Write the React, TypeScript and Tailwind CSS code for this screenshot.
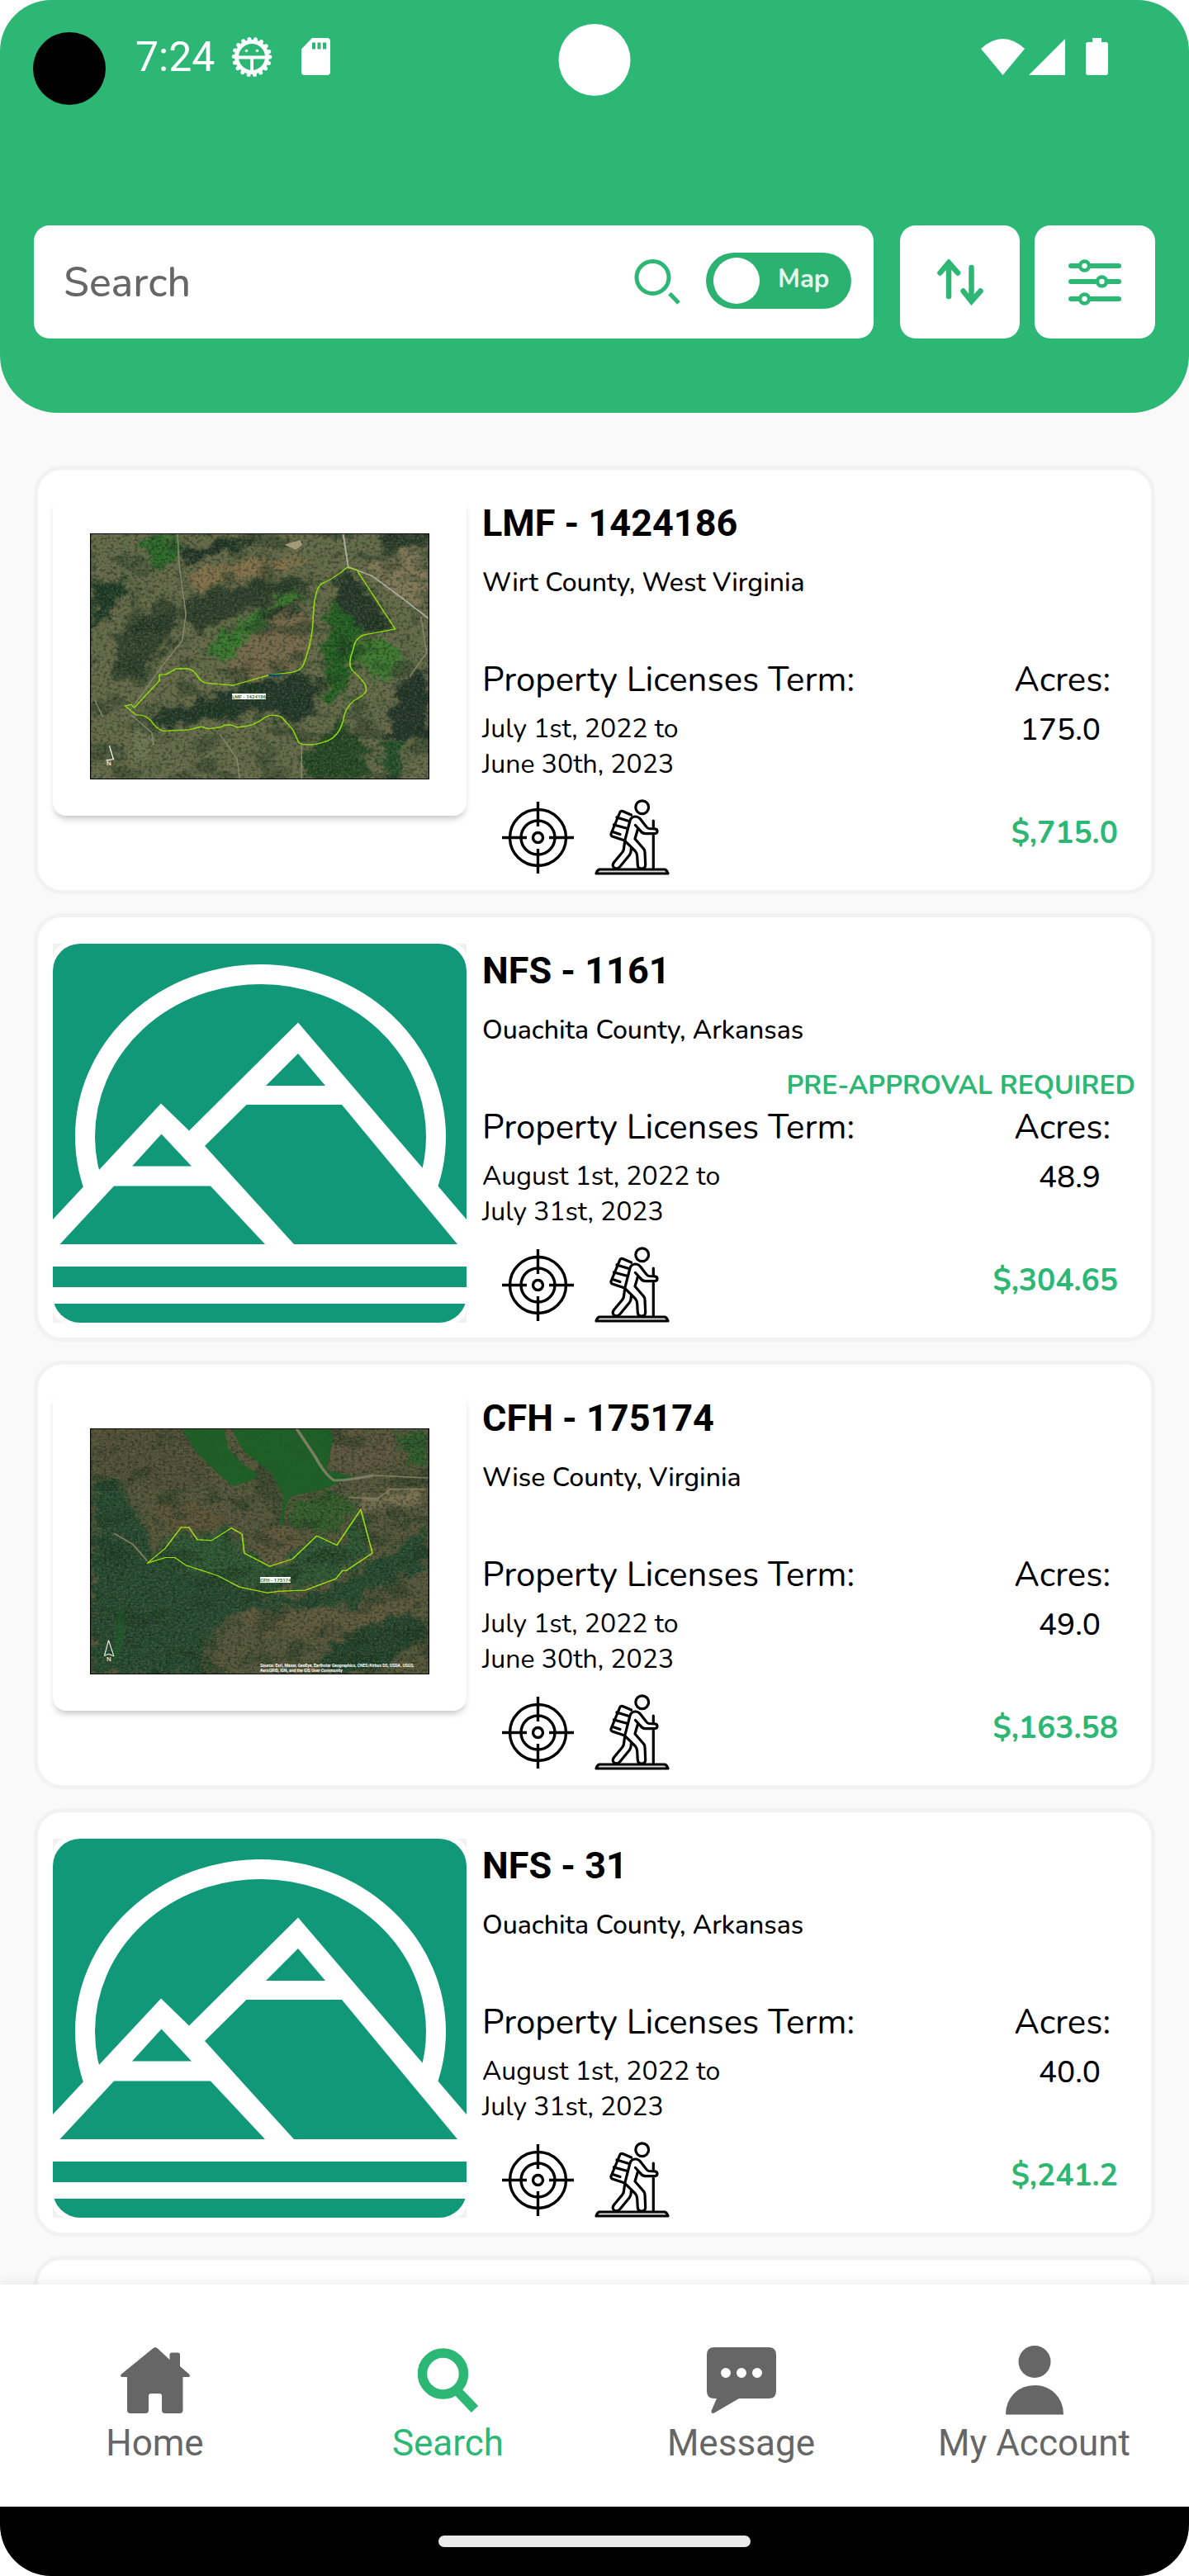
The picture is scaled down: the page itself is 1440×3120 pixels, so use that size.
import type { ReactNode } from "react";

type Thumb = "wirt" | "logo" | "wise";

interface Property {
  id: string;
  title: string;
  location: string;
  from: string;
  to: string;
  acres: string;
  price: string;
  thumb: Thumb;
  preApproval?: boolean;
}

const properties: Property[] = [
  { id: "p1", title: "LMF - 1424186", location: "Wirt County, West Virginia", from: "July 1st, 2022 to", to: "June 30th, 2023", acres: "175.0", price: "$,715.0", thumb: "wirt" },
  { id: "p2", title: "NFS - 1161", location: "Ouachita County, Arkansas", from: "August 1st, 2022 to", to: "July 31st, 2023", acres: "48.9", price: "$,304.65", thumb: "logo", preApproval: true },
  { id: "p3", title: "CFH - 175174", location: "Wise County, Virginia", from: "July 1st, 2022 to", to: "June 30th, 2023", acres: "49.0", price: "$,163.58", thumb: "wise" },
  { id: "p4", title: "NFS - 31", location: "Ouachita County, Arkansas", from: "August 1st, 2022 to", to: "July 31st, 2023", acres: "40.0", price: "$,241.2", thumb: "logo" },
];

/* ---------- status bar ---------- */

function DebugIcon() {
  return (
    <svg width="50" height="50" viewBox="0 0 50 50" fill="none" stroke="#fff" aria-hidden="true">
      <circle cx="25" cy="25" r="18.5" strokeWidth="5" />
      <circle cx="25" cy="25" r="21.8" strokeWidth="5" strokeLinecap="round" strokeDasharray="0 7.61" />
      <path d="M8 25.5H42M25 25V43" strokeWidth="4" />
      <circle cx="18.5" cy="17.5" r="1.8" fill="#fff" stroke="none" />
      <circle cx="31.5" cy="17.5" r="1.8" fill="#fff" stroke="none" />
    </svg>
  );
}

function SdCardIcon() {
  return (
    <svg width="35" height="45" viewBox="0 0 35 45" aria-hidden="true">
      <path d="M13 0H31a4 4 0 0 1 4 4V41a4 4 0 0 1-4 4H4a4 4 0 0 1-4-4V13.5Z" fill="#fff" />
      <path d="M15 5.500V13.500M21.500 5.500V13.500M28 5.500V13.500" stroke="#2DB775" strokeWidth="4" />
    </svg>
  );
}

function StatusBar() {
  return (
    <div className="flex h-[137px] items-center pr-[98px] pl-[164px] text-white">
      <span className="absolute top-[39px] left-10 size-[88px] rounded-full bg-black" />
      <span className="absolute top-[29px] left-1/2 size-[87px] -translate-x-1/2 rounded-full bg-white" />
      <time className="text-[50px] leading-[56px]">7:24</time>
      <span className="ml-5 flex items-center gap-[35px]">
        <DebugIcon />
        <SdCardIcon />
      </span>
      <span className="ml-auto flex items-center">
        <svg width="53" height="44" viewBox="0 0 53 44" aria-hidden="true">
          <path d="M0 12Q26.500-12 53 12L26.500 44Z" fill="#fff" />
        </svg>
        <svg className="ml-[5px]" width="44" height="44" viewBox="0 0 44 44" aria-hidden="true">
          <path d="M44 0V44H0Z" fill="#fff" />
        </svg>
        <svg className="ml-[25px]" width="27" height="45" viewBox="0 0 27 45" aria-hidden="true">
          <path d="M8 0H19V5H24a3 3 0 0 1 3 3V42a3 3 0 0 1-3 3H3a3 3 0 0 1-3-3V8a3 3 0 0 1 3-3H8Z" fill="#fff" />
        </svg>
      </span>
    </div>
  );
}

/* ---------- header ---------- */

function Header() {
  return (
    <header className="relative rounded-b-[70px] bg-[#2DB775] pb-[90px]">
      <StatusBar />
      <div className="mt-[136px] flex h-[137px] px-[41px]">
        <form className="flex flex-1 items-center rounded-[19px] bg-white pr-[27px] pl-9" onSubmit={(e) => e.preventDefault()}>
          <input
            type="text"
            aria-label="Search"
            placeholder="Search"
            className="min-w-0 flex-1 bg-transparent pt-0.5 font-['Nunito',sans-serif] text-[50px] leading-[62px] font-medium outline-none placeholder:text-[#666]"
          />
          <button type="submit" aria-label="Submit search" className="mr-[31px]">
            <svg width="56" height="55" viewBox="0 0 56 55" fill="none" stroke="#2DB775" strokeWidth="5" aria-hidden="true">
              <circle cx="22.500" cy="22" r="19.500" />
              <path d="M43 41.500L54 53" />
            </svg>
          </button>
          <label className="mb-1 flex h-[68px] w-[176px] cursor-pointer items-center rounded-full bg-[#2BB271] pl-[9px]">
            <input type="checkbox" role="switch" className="sr-only" />
            <span className="size-[56px] rounded-full bg-white" />
            <span className="mb-1 ml-[22px] font-['Nunito',sans-serif] text-[31px] leading-9 font-bold text-[#E4F6EC]">Map</span>
          </label>
        </form>
        <button type="button" aria-label="Sort" className="ml-8 flex w-[145px] items-center justify-center rounded-[19px] bg-white">
          <svg width="56" height="56" viewBox="0 0 56 56" fill="none" stroke="#2DB775" strokeWidth="6.500" strokeLinecap="round" aria-hidden="true">
            <path d="M14 45V6M3.500 16.500L14 4L25 16.500M41.500 10V49M31.500 38.500L41.500 51L52.500 38.500" />
          </svg>
        </button>
        <button type="button" aria-label="Filter" className="ml-[18px] flex w-[146px] items-center justify-center rounded-[19px] bg-white">
          <svg width="64" height="56" viewBox="0 0 64 56" fill="#fff" stroke="#2DB775" strokeWidth="6" strokeLinecap="round" aria-hidden="true">
            <path d="M3 8H61M3 27H61M3 48H61" />
            <g strokeWidth="4.500">
              <circle cx="19.500" cy="8" r="5.500" />
              <circle cx="40.500" cy="27" r="5.500" />
              <circle cx="19.500" cy="48" r="5.500" />
            </g>
          </svg>
        </button>
      </div>
    </header>
  );
}

/* ---------- thumbnails ---------- */

function MountainLogo() {
  return (
    <svg className="block h-[459px] w-full" viewBox="0 0 501 459" preserveAspectRatio="none" role="img" aria-label="Mountain logo">
      <defs>
        <clipPath id="sky">
          <rect width="501" height="334" />
        </clipPath>
      </defs>
      <rect width="501" height="459" fill="#f1f1f1" />
      <rect width="501" height="459" rx="17" fill="#fff" />
      <rect width="501" height="459" rx="33" fill="#119879" />
      <ellipse cx="251.500" cy="233.500" rx="212.500" ry="196.500" fill="none" stroke="#fff" strokeWidth="24" clipPath="url(#sky)" />
      <path d="M0 334L131 193.500L165 226.500L297 95.500L501 334V391H0Z" fill="#fff" />
      <g fill="#119879">
        <path d="M131.500 230.500L168 269.500H96Z" />
        <path d="M74 293.500H191L257 364H8.500Z" />
        <path d="M297 133L330 172H258Z" />
        <path d="M234.500 195H350L490 364H292L184 245Z" />
      </g>
      <rect y="416" width="501" height="20" fill="#fff" />
    </svg>
  );
}

function MapFrame({ prefix, tone, seed, box, children, overlay }: { prefix: string; tone: string; seed: number; box: [number, number, number, number]; children: ReactNode; overlay: ReactNode }) {
  const [x, y, w, h] = box;
  return (
    <div className="px-[45px] pt-[45px] pb-11">
      <div className="relative">
        <svg className="block h-[298px] w-full bg-[#46512f]" viewBox={box.join(" ")} preserveAspectRatio="none" role="img" aria-label="Satellite map">
          <defs>
            <filter id={prefix + "-dark"} x="0" y="0" width="100%" height="100%" colorInterpolationFilters="sRGB">
              <feTurbulence type="fractalNoise" baseFrequency="0.012 0.014" numOctaves="5" seed={seed} />
              <feColorMatrix values="0 0 0 0 0.10  0 0 0 0 0.20  0 0 0 0 0.12  0 6 0 0 -3.100" />
            </filter>
            <filter id={prefix + "-grain"} x="0" y="0" width="100%" height="100%" colorInterpolationFilters="sRGB">
              <feTurbulence type="fractalNoise" baseFrequency="0.110" numOctaves="3" seed={seed + 4} />
              <feColorMatrix values="0 0 0 0 0.07  0 0 0 0 0.14  0 0 0 0 0.08  0 5 0 0 -2.400" />
            </filter>
            <filter id={prefix + "-light"} x="0" y="0" width="100%" height="100%" colorInterpolationFilters="sRGB">
              <feTurbulence type="fractalNoise" baseFrequency="0.160" numOctaves="2" seed={seed + 9} />
              <feColorMatrix values="0 0 0 0 0.52  0 0 0 0 0.52  0 0 0 0 0.38  6 0 0 0 -3.000" />
            </filter>
            <filter id={prefix + "-soft"} x="-20%" y="-20%" width="140%" height="140%" colorInterpolationFilters="sRGB">
              <feGaussianBlur stdDeviation="7" result="soft" />
              <feTurbulence type="fractalNoise" baseFrequency="0.025" numOctaves="4" seed={seed + 2} result="warp" />
              <feDisplacementMap in="soft" in2="warp" scale="75" xChannelSelector="R" yChannelSelector="G" />
            </filter>
          </defs>
          <rect x={x} y={y} width={w} height={h} fill={tone} />
          {children}
          <rect x={x} y={y} width={w} height={h} opacity="0.420" filter={"url(#" + prefix + "-dark)"} />
          <rect x={x} y={y} width={w} height={h} opacity="0.400" filter={"url(#" + prefix + "-grain)"} />
          <rect x={x} y={y} width={w} height={h} opacity="0.260" filter={"url(#" + prefix + "-light)"} />
          <use href={"#" + prefix + "-lines"} />
          <rect x={x} y={y} width={w} height={h} fill="none" stroke="#000" strokeWidth="5" />
        </svg>
        {overlay}
      </div>
    </div>
  );
}

function WirtMap() {
  return (
    <MapFrame
      prefix="wirt"
      tone="#656a4a"
      seed={3}
      box={[237, 297, 895, 831]}
      overlay={
        <>
          <span className="absolute top-[194px] left-[172px] bg-white text-[6px] leading-[7px] font-bold text-[#4b7010]">LMF - 1424186</span>
          <span className="absolute top-[275px] left-[20px] text-[8px] leading-[8px] text-white">N</span>
        </>
      }
    >
      <g filter="url(#wirt-soft)">
        <path d="M380 300L468 303L465 380L410 420L385 380Z" fill="#2c6a2a" />
        <path d="M555 650L640 590L760 500L810 510L730 580L700 650L600 725L545 700Z" fill="#38792e" />
        <path d="M885 480L980 540L950 600L940 700L900 870L850 860L860 640Z" fill="#215f22" />
        <path d="M950 650L1040 670L1065 740L1000 790L935 730Z" fill="#3c7a30" />
        <path d="M240 470L350 440L270 590L240 640Z" fill="#1c3a26" />
        <path d="M470 355L600 320L700 300L570 370L490 400Z" fill="#223428" />
        <path d="M500 510L740 445L850 460L740 510L600 590L520 640L480 560Z" fill="#2f402c" />
        <path d="M430 900L640 810L800 770L840 800L830 900L780 940L700 900L440 955L400 930Z" fill="#23382a" />
        <path d="M890 450L925 415L1035 610L960 630L880 520Z" fill="#26392b" />
        <path d="M1060 790L1130 760V1000L1020 980Z" fill="#22352a" />
        <path d="M800 1040L900 930L980 1060L960 1127H800Z" fill="#264a26" />
        <path d="M300 640L440 520L480 560L440 680L360 780L300 780Z" fill="#34442f" />
        <path d="M700 560L800 530L790 600L710 610Z" fill="#303c2c" />
        <path d="M490 440L620 390L740 370L820 400L700 440L520 490Z" fill="#84724c" />
        <path d="M640 640L800 540L820 640L780 750L640 790L610 760Z" fill="#77694d" />
        <path d="M960 400L1100 350L1130 400V560L1040 510Z" fill="#82785a" />
        <path d="M340 920L410 980L400 1020L350 1080Z" fill="#6f7756" />
        <path d="M1000 300H1130V350L1010 360Z" fill="#2c3d2c" />
        <path d="M1000 1000L1060 990L1060 1127H1010Z" fill="#24502a" />
      </g>
      <g id="wirt-lines" fill="none">
        <g stroke="#83856c" strokeWidth="3">
          <path d="M468 298L472 400L490 570L480 660L430 740L380 830L340 900" />
          <path d="M905 300L918 410L980 440L1060 515L1130 585" stroke="#a9ab9a" strokeWidth="4" />
          <path d="M1110 580L1125 700L1080 780M580 975L625 1060L632 1127M345 910L400 970L405 1010M250 860L270 915M795 1010V1127" />
        </g>
        <path d="M750 335L790 320L797 335L780 352Z" fill="#a49a7a" />
        <path d="M915 412L940 420L1042 620L960 640Q935 650 931 690Q915 740 930 762Q970 805 965 830Q960 845 935 860Q915 880 908 910Q898 990 850 1003Q810 1018 788 1005L772 960L742 917Q715 905 700 917Q670 950 625 952Q600 935 580 952L550 957L530 950L500 960L430 965Q410 955 398 930Q385 910 358 910L330 880L345 875L354 885L420 795V775L438 773L465 754H495Q512 760 520 778Q530 805 555 804L615 810L710 775L770 766Q795 760 800 740Q825 660 826 570Q830 480 848 467Q880 450 915 412Z" stroke="#8fdc0a" strokeWidth="3" />
        <path d="M708 776H742" stroke="#0b4a7a" strokeWidth="6" />
        <path d="M288 1015L299 1060L280 1064" stroke="#fff" strokeWidth="2.500" />
      </g>
    </MapFrame>
  );
}

function WiseMap() {
  return (
    <MapFrame
      prefix="wise"
      tone="#54553b"
      seed={11}
      box={[237, 210, 895, 891]}
      overlay={
        <>
          <span className="absolute top-[180px] left-[206px] bg-white text-[6px] leading-[7px] font-bold text-[#4b7010]">CFH - 175174</span>
          <span className="absolute top-[276px] left-[20px] text-[8px] leading-[8px] text-white">N</span>
          <p className="absolute right-[8px] bottom-[2px] w-[197px] text-[5px] leading-[6px] font-bold text-white">
            Source: Esri, Maxar, GeoEye, Earthstar Geographics, CNES/Airbus DS, USDA, USGS, AeroGRID, IGN, and the GIS User Community
          </p>
        </>
      }
    >
      <g filter="url(#wise-soft)">
        <path d="M240 380L320 420L380 560L400 680L480 720L600 770L700 820L800 820L900 770L1000 680L1130 560V720L960 800L900 880H620L560 960L540 1100H240Z" fill="#264a30" />
        <path d="M390 690L480 570L520 610L600 570L650 660L720 700L840 600L890 630L950 510L980 660L890 750L700 805Z" fill="#2d5635" />
        <path d="M640 600L740 560L790 600L760 680L700 700Z" fill="#62583f" />
        <path d="M400 470L560 500L600 560L520 600L430 560Z" fill="#5c5339" />
        <path d="M760 470L900 440L940 500L860 600L770 560Z" fill="#335c2c" />
        <path d="M880 220L1030 230L1040 340L950 370L870 330Z" fill="#5f5640" />
        <path d="M1040 220H1130V330L1080 340Z" fill="#2e5a2c" />
        <path d="M600 870L900 860L1100 820L1000 980L700 960Z" fill="#5e583d" />
        <path d="M860 990L1090 870L1130 960L1000 1090H850Z" fill="#23432c" />
        <path d="M930 460L1100 430L1120 470L980 510Z" fill="#7b7154" />
        <path d="M240 210H480L540 330L560 420L400 440L240 360Z" fill="#524f39" />
      </g>
      <g id="wise-lines" fill="none">
        <g fill="#1f5f27" fillOpacity="0.850">
          <path d="M478 212H590L600 280L640 340L680 375L670 395L615 420L580 380L520 300Z" />
          <path d="M612 212H872L878 250L860 360L930 385L890 410L840 435L770 455L755 480L745 560H738L748 460L715 370L640 290Z" />
          <path d="M310 870L325 860L330 920L318 1010L300 1060Z" fillOpacity="0.400" />
        </g>
        <path d="M782 212L830 310Q855 375 880 398Q910 400 985 380" stroke="#7c7f66" strokeWidth="8" />
        <path d="M985 380L1130 390M920 460L995 465L1030 430L1120 430M300 590L350 630L388 690" stroke="#857b5e" strokeWidth="4" />
        <path d="M388 698L435 645L477 569H498L520 613L558 616L610 571L638 593L644 662L711 710L772 682L835 599L888 633L951 504L982 662L913 725H903L885 755L805 796L735 800L705 806L630 784L575 744L490 706L461 678H435Z" stroke="#9be00d" strokeWidth="3" />
        <path d="M286 978L275 1034L286 1027L300 1035Z" stroke="#fff" strokeWidth="2" />
      </g>
    </MapFrame>
  );
}

function Thumbnail({ kind }: { kind: Thumb }) {
  if (kind === "logo") return <MountainLogo />;
  return (
    <div className="rounded-2xl bg-white shadow-[0_6px_8px_-3px_rgba(0,0,0,0.25)]">
      {kind === "wirt" ? <WirtMap /> : <WiseMap />}
    </div>
  );
}

/* ---------- property card ---------- */

function TargetIcon() {
  return (
    <svg width="87" height="87" viewBox="0 0 87 87" fill="none" stroke="#000" strokeWidth="3.400" role="img" aria-label="Hunting">
      <circle cx="43.500" cy="43.500" r="34" />
      <circle cx="43.500" cy="43.500" r="20.500" />
      <circle cx="43.500" cy="43.500" r="6" />
      <path d="M0 43.500H30M57 43.500H87M43.500 0V30M43.500 57V87" />
    </svg>
  );
}

function HikerIcon() {
  return (
    <svg width="91" height="92" viewBox="0 0 91 92" fill="none" stroke="#000" strokeWidth="3.200" strokeLinecap="round" strokeLinejoin="round" role="img" aria-label="Hiking">
      <circle cx="57.700" cy="9.700" r="7.900" />
      <path d="M49.500 31.500L55 37.500Q58 41.700 61.500 41.700H73Q76 41.500 76 38.800Q76 36 73 35.800L66 35.500Q64 35.300 62.500 33L55.500 24Q53 21 49.500 21Q44.500 21 43 26L36.700 50.300L49.500 63Q51.700 65.500 51.700 69L52.300 80Q52.800 84 57 84Q61.700 84 61.700 79.500L61 64Q61 61.500 59 59.500L49 48L52.700 35.500" />
      <path d="M36.700 51L35.500 60Q35.300 62.500 33.500 64.500L23.500 76.500Q20.500 81 24.500 83.500Q28 85 31 81.500L42.500 67.500Q44.500 65 44.300 60" />
      <path d="M44.500 19L34 14.500Q31.500 14 30.500 16.500L20 42Q19.500 44 21.500 45L35 49.500M27 22L41.500 26.500M23.500 31L40 35.500M22 39.500L31 42.500" />
      <path d="M71.300 26V33.500M71.300 44V83" />
      <path d="M6 85H85Q88 86 89 90H2Q3 86 6 85Z" fill="#ddd" />
    </svg>
  );
}

function PropertyCard({ property }: { property: Property }) {
  return (
    <article className="flex h-[519px] shrink-0 gap-[19px] rounded-[34px] border-[5px] border-[#f2f2f2] bg-white pt-8 pr-[19px] pb-[18px] pl-[18px]">
      <div className="w-[501px] shrink-0">
        <Thumbnail kind={property.thumb} />
      </div>
      <div className="min-w-0 flex-1 pt-1.5 font-['Nunito',sans-serif] font-medium text-black">
        <h2 className="font-['Roboto',sans-serif] text-[45px] leading-[54px] font-bold">{property.title}</h2>
        <p className="mt-[25px] text-[32px] leading-10">{property.location}</p>
        <div className="flex h-[73px] items-end justify-end pb-1.5">
          {property.preApproval && <p className="text-[32px] leading-10 font-bold text-[#2DB775]">PRE-APPROVAL REQUIRED</p>}
        </div>
        <dl className="flex justify-between">
          <div>
            <dt className="text-[42px] leading-[50px] font-normal">Property Licenses Term:</dt>
            <dd className="mt-3 text-[32px] leading-[43px] font-normal">
              {property.from}
              <br />
              {property.to}
            </dd>
          </div>
          <div className="text-right">
            <dt className="pr-[30px] text-[42px] leading-[50px] font-normal">Acres:</dt>
            <dd className="mt-3.5 pr-[42px] text-[37px] leading-[43px]">{property.acres}</dd>
          </div>
        </dl>
        <div className="mt-[21px] flex h-[92px] items-center pl-6">
          <TargetIcon />
          <span className="ml-[25px]">
            <HikerIcon />
          </span>
          <p className="ml-auto pr-[21px] pb-2.5 text-[37px] leading-[44px] font-bold text-[#2DB775]">{property.price}</p>
        </div>
      </div>
    </article>
  );
}

/* ---------- bottom navigation ---------- */

function NavItem({ label, active, children }: { label: string; active?: boolean; children: ReactNode }) {
  return (
    <a
      href={"#" + label.toLowerCase().replace(" ", "-")}
      aria-current={active ? "page" : undefined}
      className={active ? "flex flex-1 flex-col items-center text-[#2DB775]" : "flex flex-1 flex-col items-center text-[#666]"}
    >
      <span className="flex h-[84px] items-center">{children}</span>
      <span className="mt-[9px] text-[44px] leading-[50px]">{label}</span>
    </a>
  );
}

function BottomNav() {
  return (
    <nav className="relative flex h-[269px] shrink-0 bg-white px-[10px] pt-[74px] shadow-[0_-3px_14px_rgba(0,0,0,0.07)]">
      <NavItem label="Home">
        <svg width="84" height="80" viewBox="0 0 84 80" fill="currentColor" aria-hidden="true">
          <path d="M39 1.500Q42-1.500 45 1.500L59.500 15V9Q59.500 6.500 62 6.500H70Q72 6.500 72 9V23L83 32.500Q85.500 36 81.500 36H75.500V76Q75.500 80 71.500 80H54Q50 80 50 76V59Q50 56 47 56H37Q34 56 34 59V76Q34 80 30 80H12Q8 80 8 76V36H2.500Q-1.500 36 1 32.500Z" />
        </svg>
      </NavItem>
      <NavItem label="Search" active>
        <svg width="74" height="78" viewBox="0 0 74 78" fill="none" stroke="currentColor" strokeWidth="11.500" aria-hidden="true">
          <circle cx="30.500" cy="31" r="25" />
          <path d="M48 52L69 74" />
        </svg>
      </NavItem>
      <NavItem label="Message">
        <svg width="84" height="80" viewBox="0 0 84 80" fill="currentColor" aria-hidden="true">
          <path fillRule="evenodd" d="M9 0H75Q84 0 84 9V53Q84 62 75 62H39L9 79.500Q5.500 81 5.500 77L12 62H9Q0 62 0 53V9Q0 0 9 0ZM17 31a6 6 0 1 0 12 0a6 6 0 1 0-12 0ZM36 31a6 6 0 1 0 12 0a6 6 0 1 0-12 0ZM55 31a6 6 0 1 0 12 0a6 6 0 1 0-12 0Z" />
        </svg>
      </NavItem>
      <NavItem label="My Account">
        <svg width="70" height="84" viewBox="0 0 70 84" fill="currentColor" aria-hidden="true">
          <circle cx="35" cy="19.500" r="19.500" />
          <path d="M0 83.500Q0 68 10 58Q20 48 35 48Q50 48 60 58Q70 68 70 83.500Z" />
        </svg>
      </NavItem>
    </nav>
  );
}

export default function App() {
  return (
    <div className="h-screen bg-white">
      <div className="relative flex h-full flex-col overflow-hidden rounded-[62px] bg-[#f9f9f9] font-['Roboto',sans-serif]">
        <Header />
        <main className="flex min-h-0 flex-1 flex-col gap-[23px] overflow-hidden px-[41px] pt-16">
          {properties.map((p) => (
            <PropertyCard key={p.id} property={p} />
          ))}
          <div className="h-[519px] shrink-0 rounded-[34px] border-[5px] border-[#f2f2f2] bg-white" />
        </main>
        <BottomNav />
        <div className="flex h-[84px] shrink-0 items-center justify-center bg-black">
          <span className="h-[14px] w-[378px] rounded-full bg-[#ebebeb]" />
        </div>
      </div>
    </div>
  );
}
